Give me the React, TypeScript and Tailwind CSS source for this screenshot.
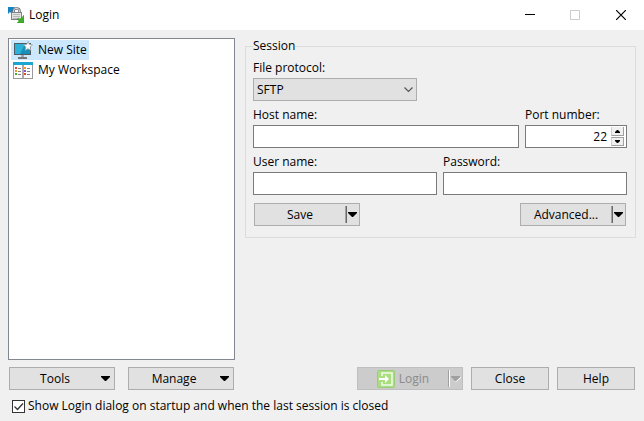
import { useState } from "react";
import type { ReactNode } from "react";

const buttonStyle =
  "flex h-[23px] items-center border border-[#adadad] bg-[#e1e1e1] text-black";
const inputStyle =
  "h-[23px] w-full min-w-0 border border-[#7a7a7a] bg-white px-1 outline-none";

function AppIcon() {
  return (
    <svg width="16" height="16" viewBox="0 0 16 16" aria-hidden="true">
      <path d="M0 0h7L5 2l2 2-3 3-2-2-2 2z" fill="#1684c4" />
      <path d="M5.500 6V4a2.500 2.500 0 0 1 2.500-2.500h1A2.500 2.500 0 0 1 11.500 4v2" fill="none" stroke="#6f7276" strokeWidth="2.600" />
      <path d="M5.500 6V4a2.500 2.500 0 0 1 2.500-2.500h1A2.500 2.500 0 0 1 11.500 4v2" fill="none" stroke="#d9dadb" strokeWidth="1" />
      <rect x="3.500" y="5.500" width="10" height="7" fill="#e3e3e3" stroke="#808386" />
      <path d="M5 7.500h7M5 9.500h7M5 11.500h4" stroke="#b9b9b9" />
      <path d="M16 16H9l2-2-2-2 1-1 2 1 2-1.500L16 8z" fill="#3fae2a" stroke="#2f8f22" strokeWidth=".4" />
    </svg>
  );
}

function SiteIcon() {
  return (
    <svg width="20" height="18" viewBox="0 0 20 18" aria-hidden="true">
      <rect x="1" y="2" width="17" height="12" fill="#4f5c64" />
      <path d="M2 3h15v10H2z" fill="#2cb1d8" />
      <path d="M12 3h5v10H7z" fill="#1590b8" />
      <path d="M8 14h3v2H8z" fill="#a5a5a5" />
      <path d="M5 16h9v2H5z" fill="#777" />
      <path
        d="M15 .5l1.400 2.900 3.100.4-2.300 2.200.6 3.300L15 7.700l-2.800 1.600.6-3.300-2.300-2.200 3.100-.4z"
        fill="#fafafa"
        stroke="#9aa3aa"
        strokeWidth=".8"
      />
    </svg>
  );
}

function WorkspaceIcon() {
  return (
    <svg width="20" height="17" viewBox="0 0 20 17" aria-hidden="true">
      <rect x=".5" y=".5" width="19" height="16" fill="#fff" stroke="#9a9a9a" />
      <path d="M0 0h20v3H0z" fill="#1ca6d2" />
      <path d="M9.500 3v13M10.500 3v13" stroke="#a9a9a9" />
      <path d="M2 5h2v2H2zM11 11h2v2h-2z" fill="#e8452c" />
      <path d="M2 8h2v2H2zM11 5h2v2h-2z" fill="#f29a1c" />
      <path d="M2 11h2v2H2z" fill="#54ad32" />
      <path d="M11 8h2v2h-2z" fill="#8456c5" />
      <path d="M5 6.500h3M5 9.500h3M5 12.500h3M14 6.500h3M14 9.500h3M14 12.500h3" stroke="#808080" />
    </svg>
  );
}

function LoginIcon() {
  return (
    <svg width="18" height="18" viewBox="0 0 18 18" aria-hidden="true">
      <rect x=".5" y=".5" width="17" height="17" rx="1" fill="#aade80" stroke="#9ccb79" />
      <path d="M5 6V3h10v12H5v-3" fill="none" stroke="#f4fbec" strokeWidth="1.500" />
      <path d="M2 8h6V5l4 4-4 4v-3H2z" fill="#fff" />
    </svg>
  );
}

function DownArrow({ disabled = false }: { disabled?: boolean }) {
  return (
    <svg width="11" height="6" viewBox="0 0 11 6" className="shrink-0" aria-hidden="true">
      {disabled && <path d="M11 1v1L6 6H5z" fill="#fff" />}
      <path d="M1 0h9v1L6 5H5L1 1z" fill={disabled ? "#a0a0a0" : "#000"} />
    </svg>
  );
}

function SplitButton({ children, disabled = false }: { children: ReactNode; disabled?: boolean }) {
  return (
    <button
      type="button"
      disabled={disabled}
      className={
        disabled
          ? "flex h-[23px] w-[106px] items-center border border-[#bfbfbf] bg-[#cccccc] pr-px text-[#8b8b8b]"
          : `${buttonStyle} w-[106px] pr-px`
      }
    >
      <span className="flex flex-1 items-center justify-center gap-1">{children}</span>
      <span
        className={
          disabled
            ? "h-[17px] w-0.5 border-l border-[#a0a0a0] bg-white"
            : "h-[17px] w-0.5 border-l border-[#a0a0a0] bg-[#696969]"
        }
      />
      <span className="flex w-[11px] justify-center">
        <DownArrow disabled={disabled} />
      </span>
    </button>
  );
}

function MenuButton({ children }: { children: ReactNode }) {
  return (
    <button type="button" className={`${buttonStyle} w-[106px] pr-[3px]`}>
      <span className="flex-1">{children}</span>
      <DownArrow />
    </button>
  );
}

function Field({ id, label, children }: { id: string; label: string; children: ReactNode }) {
  return (
    <div className="flex min-w-0 flex-col gap-0.5">
      <label htmlFor={id}>{label}</label>
      {children}
    </div>
  );
}

function TitleBar() {
  return (
    <header className="flex h-[30px] items-center gap-[5px] bg-white pl-2">
      <AppIcon />
      <h1 className="flex-1">Login</h1>
      <div className="flex h-full">
        <button type="button" aria-label="Minimize" className="flex w-11 items-center justify-center">
          <svg width="10" height="10" viewBox="0 0 10 10"><path d="M0 4.500h10" stroke="#000" /></svg>
        </button>
        <button type="button" aria-label="Maximize" disabled className="flex w-[46px] items-center justify-center">
          <svg width="10" height="10" viewBox="0 0 10 10"><path d="M.5.5h9v9h-9z" fill="none" stroke="#ccc" /></svg>
        </button>
        <button type="button" aria-label="Close window" className="flex w-[46px] items-center justify-center">
          <svg width="10" height="10" viewBox="0 0 10 10"><path d="M0 0l10 10M10 0L0 10" stroke="#000" strokeWidth="1.200" /></svg>
        </button>
      </div>
    </header>
  );
}

export default function App() {
  const [port, setPort] = useState(22);
  const [showOnStartup, setShowOnStartup] = useState(true);

  return (
    <div className="flex min-h-screen flex-col bg-[#f0f0f0] font-['Open_Sans','Noto_Sans',sans-serif] text-[12px] leading-4 text-black">
      <TitleBar />
      <main className="flex flex-1 gap-2.5 px-2 pt-2">
        <ul className="w-[227px] shrink-0 border border-[#828790] bg-white px-0.5 pt-px">
          <li className="flex">
            <button type="button" className="flex h-5 items-center gap-[5px] bg-[#cce8ff] px-0.5">
              <SiteIcon />
              New Site
            </button>
          </li>
          <li className="flex">
            <button type="button" className="flex h-5 items-center gap-[5px] px-0.5">
              <WorkspaceIcon />
              My Workspace
            </button>
          </li>
        </ul>

        <fieldset className="flex min-w-0 flex-1 flex-col gap-1.5 self-start border border-[#dcdcdc] pt-1.5 pr-2 pb-[11px] pl-[7px]">
          <legend>Session</legend>
          <Field id="protocol" label="File protocol:">
            <div className="relative w-[164px]">
              <select
                id="protocol"
                className="block h-[23px] w-full appearance-none border border-[#adadad] bg-[#e1e1e1] pr-6 pl-[3px] outline-none"
              >
                <option>SFTP</option>
                <option>SCP</option>
                <option>FTP</option>
              </select>
              <svg
                width="9"
                height="6"
                viewBox="0 0 9 6"
                className="pointer-events-none absolute top-[9px] right-1"
                aria-hidden="true"
              >
                <path d="M.5.5l4 4 4-4" fill="none" stroke="#555" strokeWidth="1.200" />
              </svg>
            </div>
          </Field>
          <div className="grid grid-cols-[1fr_102px] gap-1.5">
            <Field id="host" label="Host name:">
              <input id="host" type="text" className={inputStyle} />
            </Field>
            <Field id="port" label="Port number:">
              <div className="flex h-[23px] items-center border border-[#7a7a7a] bg-white pr-0.5">
                <input
                  id="port"
                  type="text"
                  inputMode="numeric"
                  value={port}
                  onChange={(event) => setPort(Number(event.target.value) || 0)}
                  className="min-w-0 flex-1 pr-1 text-right outline-none"
                />
                <div className="flex w-[13px] flex-col gap-px">
                  <button
                    type="button"
                    aria-label="Increase port"
                    onClick={() => setPort(port + 1)}
                    className="flex h-[9px] items-center justify-center border-x border-b border-[#a0a0a0] border-l-[#d0d0d0] bg-[#f0f0f0]"
                  >
                    <svg width="5" height="3" viewBox="0 0 5 3"><path d="M2 0h1l2 2v1H0V2z" /></svg>
                  </button>
                  <button
                    type="button"
                    aria-label="Decrease port"
                    onClick={() => setPort(port - 1)}
                    className="flex h-[9px] items-center justify-center border border-[#a0a0a0] border-l-[#d0d0d0] bg-[#f0f0f0]"
                  >
                    <svg width="5" height="3" viewBox="0 0 5 3"><path d="M2 3h1l2-2V0H0v1z" /></svg>
                  </button>
                </div>
              </div>
            </Field>
          </div>
          <div className="grid grid-cols-2 gap-1.5">
            <Field id="user" label="User name:">
              <input id="user" type="text" className={inputStyle} />
            </Field>
            <Field id="password" label="Password:">
              <input id="password" type="password" className={inputStyle} />
            </Field>
          </div>
          <div className="flex justify-between px-px pt-0.5">
            <SplitButton>Save</SplitButton>
            <SplitButton>Advanced...</SplitButton>
          </div>
        </fieldset>
      </main>

      <footer className="px-[9px] pt-[7px] pb-[7px]">
        <div className="flex justify-between">
          <div className="flex gap-[13px]">
            <MenuButton>Tools</MenuButton>
            <MenuButton>Manage</MenuButton>
          </div>
          <div className="flex gap-2">
            <SplitButton disabled>
              <LoginIcon />
              Login
            </SplitButton>
            <button type="button" className={`${buttonStyle} w-[78px] justify-center`}>Close</button>
            <button type="button" className={`${buttonStyle} w-[78px] justify-center`}>Help</button>
          </div>
        </div>
        <div className="flex items-center gap-[3px] pt-2 pl-[3px]">
          <span className="relative flex size-[13px]">
            <input
              id="startup"
              type="checkbox"
              checked={showOnStartup}
              onChange={(event) => setShowOnStartup(event.target.checked)}
              className="size-[13px] appearance-none border border-[#333] bg-white"
            />
            {showOnStartup && (
              <svg
                width="13"
                height="13"
                viewBox="0 0 13 13"
                className="pointer-events-none absolute inset-0"
                aria-hidden="true"
              >
                <path d="M2.500 6.500l3 3 5.500-6" fill="none" stroke="#333" strokeWidth="1.300" />
              </svg>
            )}
          </span>
          <label htmlFor="startup">Show Login dialog on startup and when the last session is closed</label>
        </div>
      </footer>
    </div>
  );
}
